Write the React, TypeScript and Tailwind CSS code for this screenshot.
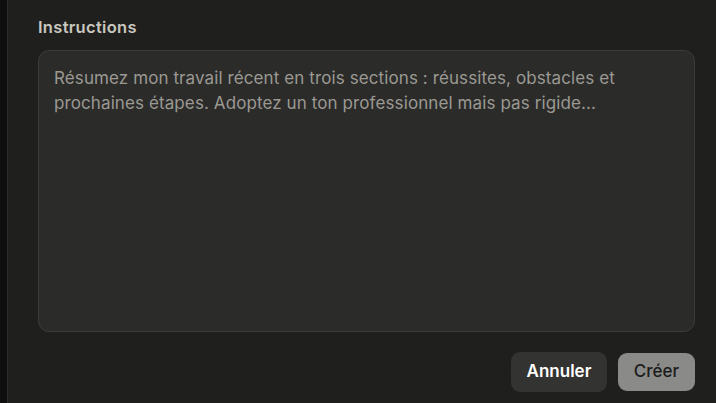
export default function App() {
  return (
    <div className="flex h-[403px] w-[716px] overflow-hidden bg-[#1f1f1e] font-['Inter',sans-serif]">
      <div className="w-[8px] shrink-0 border-r border-[#2c2c2b] bg-[#0e0e0e]" />
      <div className="flex flex-1 flex-col pl-[30px] pr-[21px] pt-[15px]">
        <label className="text-[16.5px] font-semibold leading-[24px] tracking-[0.3px] text-[#c9c7be]">
          Instructions
        </label>
        <div className="mt-[11px] h-[282px] rounded-[11px] border border-[#3b3b39] bg-[#2b2b2a] px-[15px] pt-[15px]">
          <p className="text-[17px] leading-[25px] tracking-[0.1px] text-[#9b9992]">
            Résumez mon travail récent en trois sections : réussites, obstacles et
            prochaines étapes. Adoptez un ton professionnel mais pas rigide...
          </p>
        </div>
        <div className="mt-[20px] flex items-center justify-end gap-[11px]">
          <button className="h-[40px] w-[96px] rounded-[9px] bg-[#333332] text-[17px] font-semibold text-white">
            Annuler
          </button>
          <button className="h-[38px] w-[77px] rounded-[9px] bg-[#8a8a89] text-[17px] font-medium text-[#1c1c1b]">
            Créer
          </button>
        </div>
      </div>
    </div>
  );
}
